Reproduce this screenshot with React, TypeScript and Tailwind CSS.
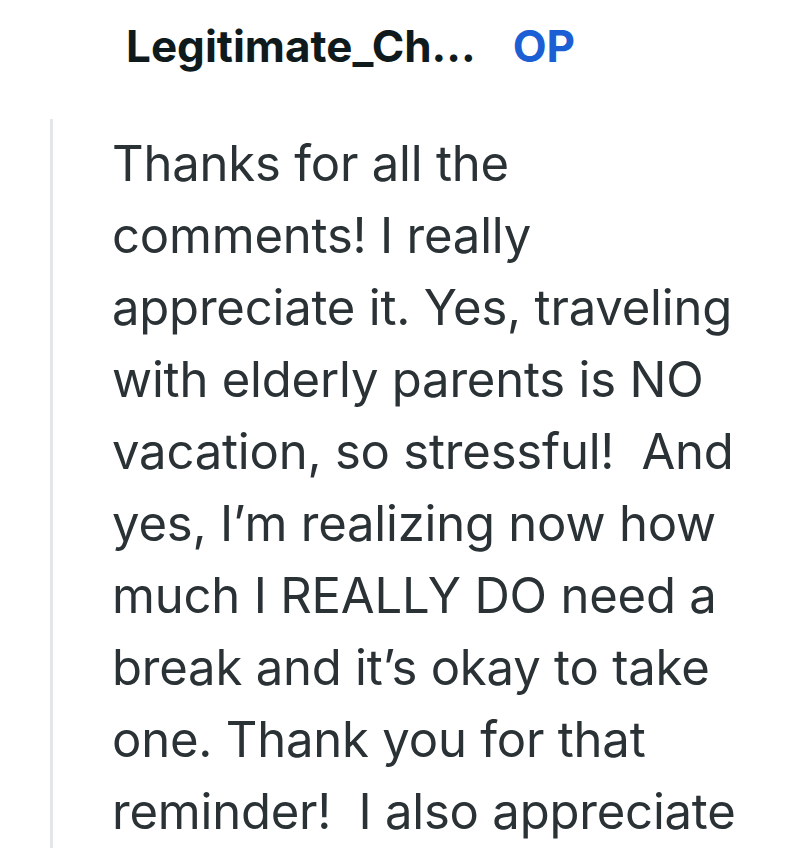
import React from 'react';

const BODY =
  'Thanks for all the comments! I really appreciate it. Yes, traveling with elderly parents is NO vacation, so stressful!  And yes, I\u2019m realizing now how much I REALLY DO need a break and it\u2019s okay to take one. Thank you for that reminder!  I also appreciate';

export default function App() {
  return (
    <div
      className="h-[850px] w-[800px] overflow-hidden bg-white"
      style={{ fontFamily: 'Inter, "Noto Sans", sans-serif' }}
    >
      {/* ── Autore ─────────────────────────────────────────────── */}
      <div className="flex items-center gap-[37px] pl-[126px] pt-[22px] text-[44px] leading-[48px] font-bold">
        <span className="text-[#0f1a1c]">Legitimate_Ch...</span>
        <span className="text-[#1c5fd4]">OP</span>
      </div>

      {/* ── Corpo commento ─────────────────────────────────────── */}
      <div className="mt-[49px] flex">
        <div className="ml-[50px] w-[3px] shrink-0 bg-[#e4e6e7]" />
        <p className="ml-[59px] w-[660px] whitespace-pre-wrap pt-[9px] text-[49px] leading-[72px] tracking-[-0.2px] text-[#2a3236]">
          {BODY}
        </p>
      </div>
    </div>
  );
}
